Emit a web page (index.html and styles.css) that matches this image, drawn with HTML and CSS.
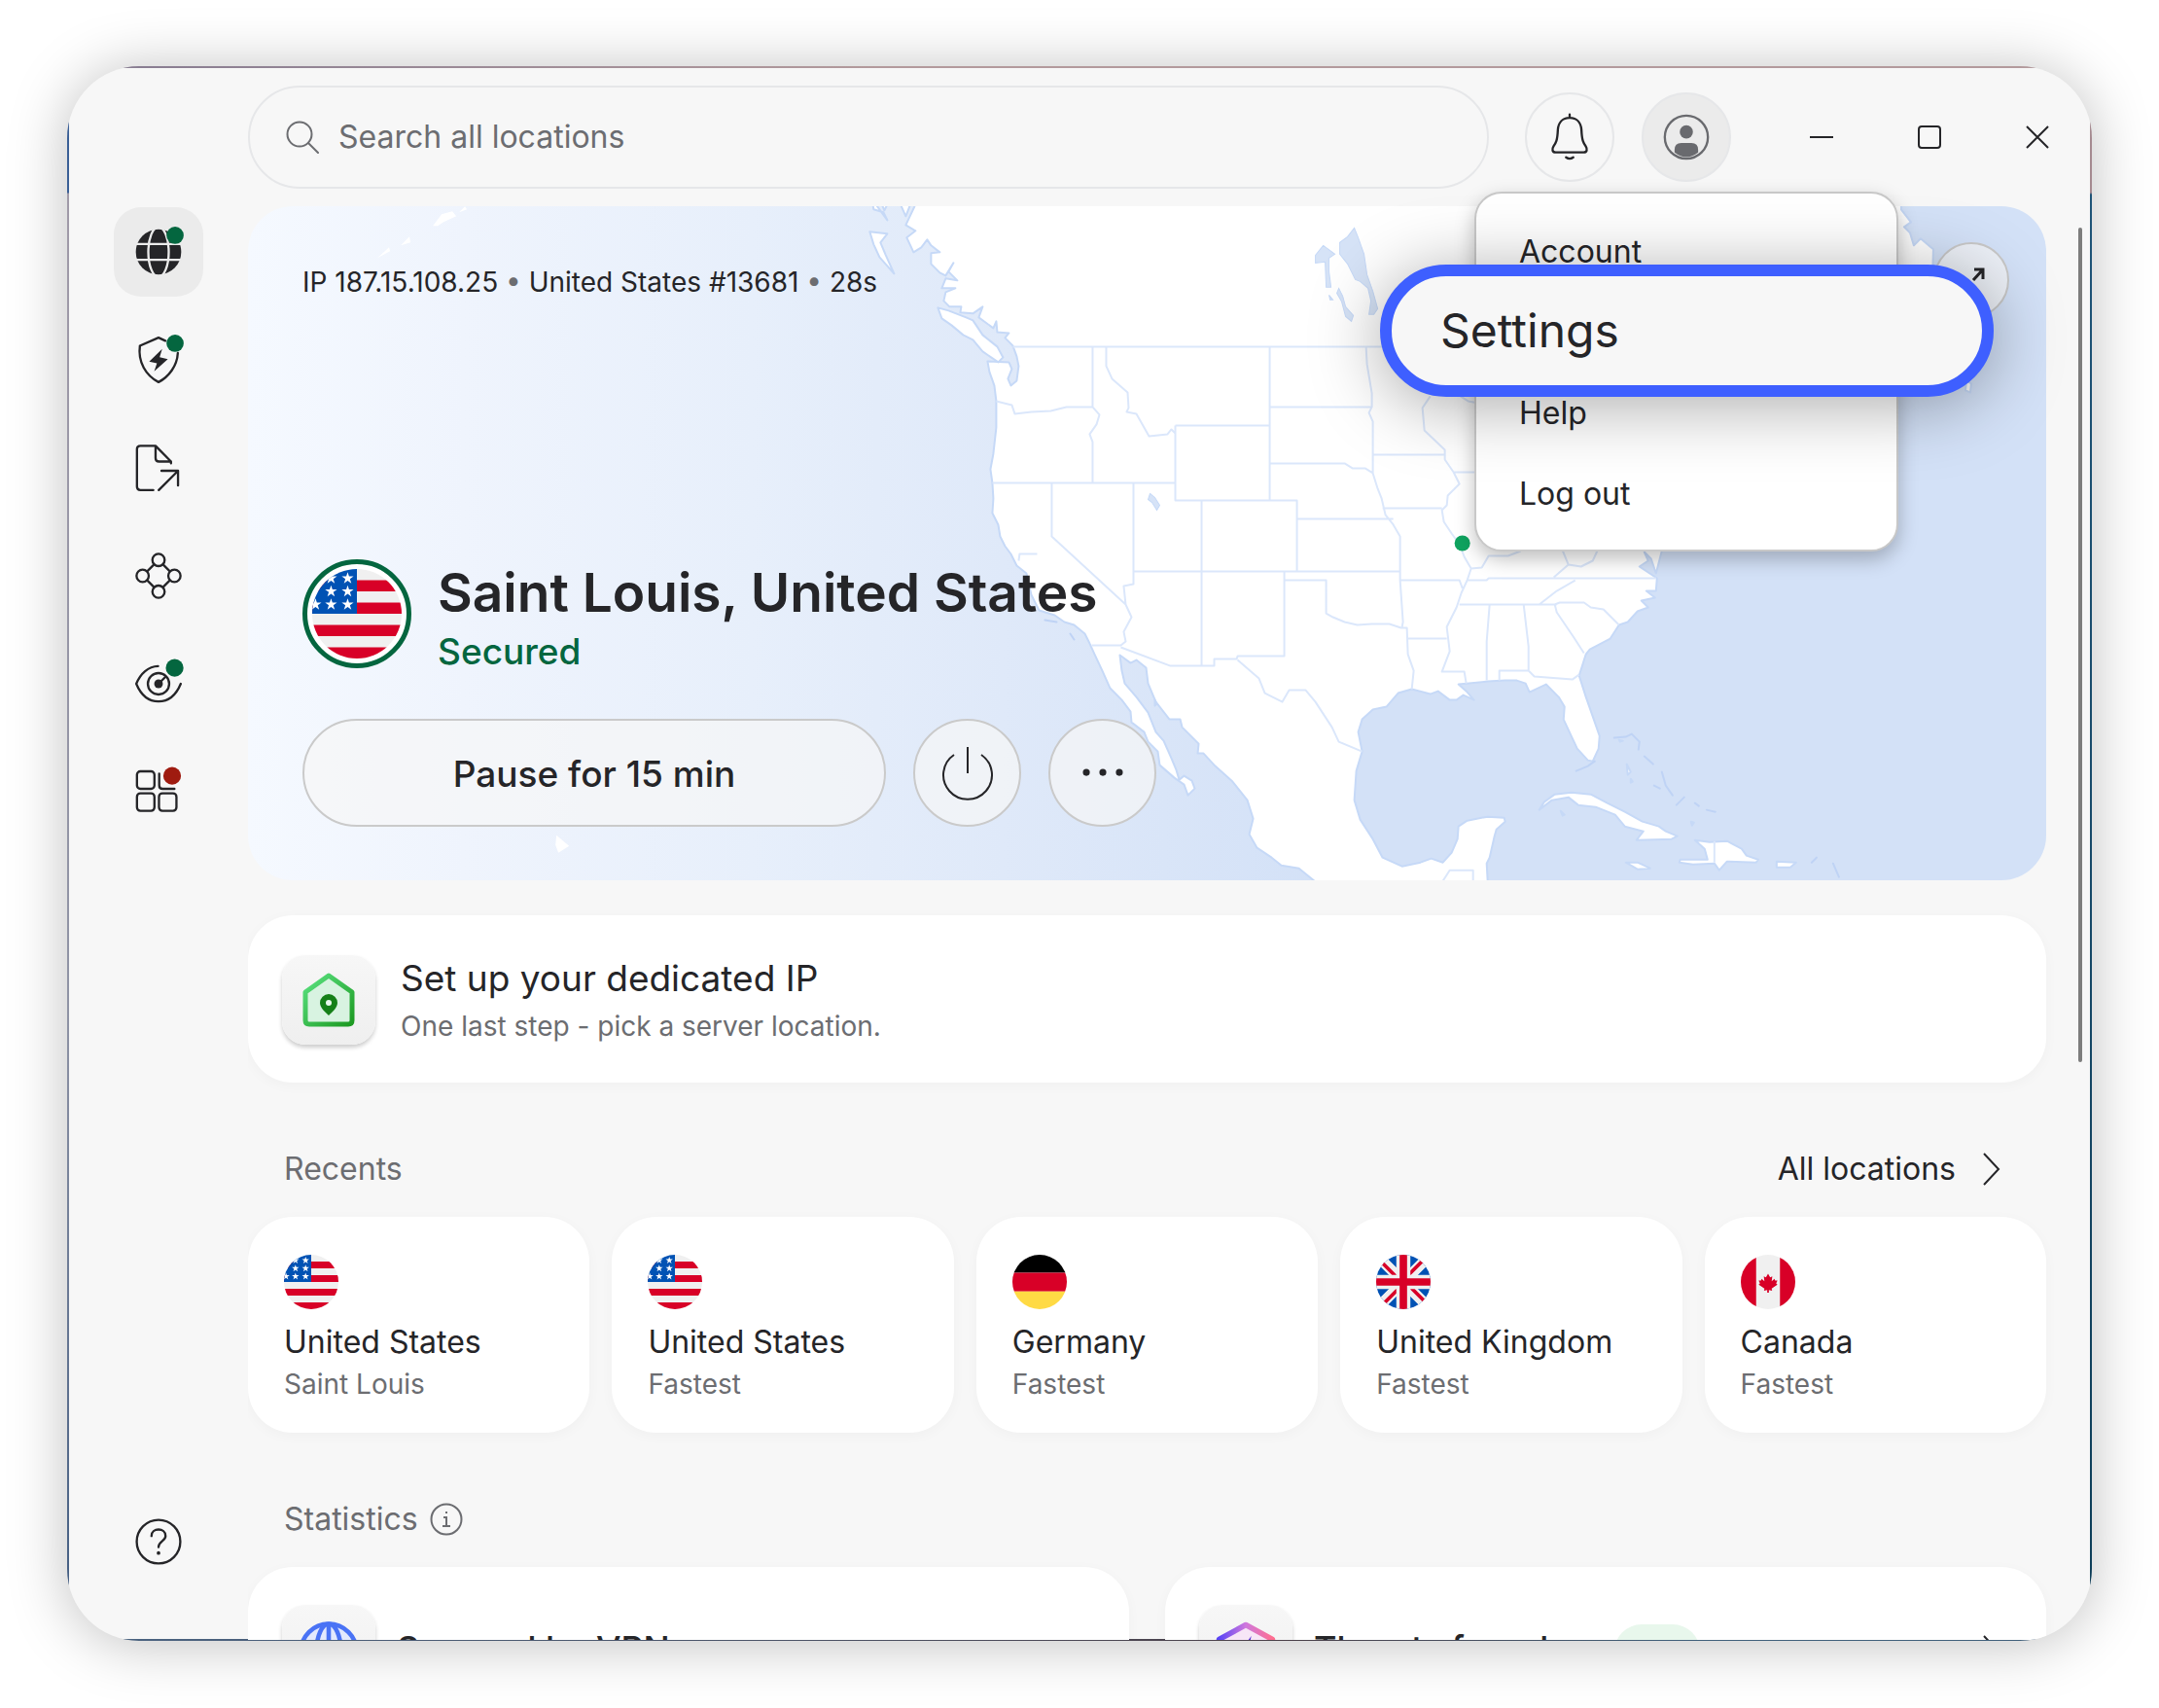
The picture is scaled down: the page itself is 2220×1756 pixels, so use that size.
FILE: index.html
```html
<!DOCTYPE html>
<html lang="en">
<head>
<meta charset="utf-8">
<meta name="viewport" content="width=device-width, initial-scale=1">
<title>VPN</title>
<link rel="stylesheet" href="styles.css">
</head>
<body>
<svg class="defs" aria-hidden="true">
  <defs>
    <clipPath id="round"><circle cx="256" cy="256" r="256"/></clipPath>
    <linearGradient id="green" x1="0" y1="0" x2="1" y2="1"><stop offset="0" stop-color="#5be382"/><stop offset="1" stop-color="#1d9a22"/></linearGradient>
    <linearGradient id="violet" x1="0" y1="0" x2="1" y2="0"><stop offset="0" stop-color="#5b45f5"/><stop offset=".5" stop-color="#cf78dd"/><stop offset="1" stop-color="#ff6f91"/></linearGradient>
    <symbol id="flag-us" viewBox="0 0 512 512">
      <g clip-path="url(#round)">
        <path fill="#f0f0f0" d="M0 0h512v512H0z"/>
        <path fill="#d80027" d="M0 64h512v64H0zM0 192h512v64H0zM0 320h512v64H0zM0 448h512v64H0z"/>
        <path fill="#0052b4" d="M0 0h256v256H0z"/>
        <path id="star" fill="#fff" d="m203 18 8 24h26l-21 15 8 25-21-15-21 15 8-25-21-15h26z"/>
        <use href="#star" y="75"/><use href="#star" y="150"/>
        <use href="#star" x="-95" y="75"/><use href="#star" x="-95" y="150"/><use href="#star" x="-95" y="0"/>
        <use href="#star" x="-184" y="150"/>
      </g>
    </symbol>
    <symbol id="flag-de" viewBox="0 0 512 512">
      <g clip-path="url(#round)"><path d="M0 0h512v170H0z"/><path fill="#d80027" d="M0 170h512v176H0z"/><path fill="#ffda44" d="M0 346h512v166H0z"/></g>
    </symbol>
    <symbol id="flag-gb" viewBox="0 0 512 512">
      <g clip-path="url(#round)">
        <path fill="#0052b4" d="M0 0h512v512H0z"/>
        <path stroke="#f0f0f0" stroke-width="100" d="m0 0 512 512M512 0 0 512"/>
        <path stroke="#d80027" stroke-width="34" d="m0 18 256 256M494 0 256 238M512 494 256 238M18 512l238-238"/>
        <path stroke="#f0f0f0" stroke-width="132" d="M256 0v512M0 256h512"/>
        <path stroke="#d80027" stroke-width="70" d="M256 0v512M0 256h512"/>
      </g>
    </symbol>
    <symbol id="flag-ca" viewBox="0 0 512 512">
      <g clip-path="url(#round)">
        <path fill="#f0f0f0" d="M0 0h512v512H0z"/><path fill="#d80027" d="M0 0h144v512H0zM368 0h144v512H368z"/>
        <path fill="#d80027" d="m256 178 20 34 20-8-6 44 26-22 6 16 22 0-12 28 12 10-54 38 4 20-30-6v24h-16v-24l-30 6 4-20-54-38 12-10-12-28 22 0 6-16 26 22-6-44 20 8z"/>
      </g>
    </symbol>
  </defs>
</svg>

<div class="window">
  <nav class="sidebar" aria-label="Main">
    <button class="nav-item is-active" type="button" aria-label="VPN">
      <svg class="icon" viewBox="0 0 24 24"><circle cx="12" cy="12" r="10" fill="#252528"/><g fill="none" stroke="#ebebeb" stroke-width="1"><path d="M2 8.500h20M2 15.500h20"/><ellipse cx="12" cy="12" rx="4.500" ry="11"/></g><circle cx="19.300" cy="4.700" r="3.800" fill="#04663f"/></svg>
    </button>
    <button class="nav-item" type="button" aria-label="Threat protection">
      <svg class="icon" viewBox="0 0 24 24"><path class="line" d="M15 3.600 12 2.200 3.800 5.800C2.800 13 6.500 19 12 21.800c4.600-2.400 8.200-7.200 8.500-12.800"/><path fill="#252528" d="m13.600 7.200-5.700 5.500 3.400.8-1.200 3.500 6-5.300-3.600-.9z"/><circle cx="19.300" cy="4.700" r="3.800" fill="#04663f"/></svg>
    </button>
    <button class="nav-item" type="button" aria-label="File sharing">
      <svg class="icon" viewBox="0 0 24 24"><path class="line" d="M9.700 21.800H4Q2.500 21.800 2.500 20.300V3.800Q2.500 2.300 4 2.300h6.700l6.800 6.900V10M10.700 2.300v5.400q0 1.500 1.500 1.500h5.300M13.300 13.300h7.300v6.500M20.300 13.600l-8.200 8.200"/></svg>
    </button>
    <button class="nav-item" type="button" aria-label="Meshnet">
      <svg class="icon" viewBox="0 0 24 24"><g class="line"><circle cx="12" cy="5" r="2.700"/><circle cx="12" cy="19" r="2.700"/><circle cx="5" cy="12" r="2.700"/><circle cx="19" cy="12" r="2.700"/><path d="m10 7-3 3M14 7l3 3M10 17l-3-3M14 17l3-3"/></g></svg>
    </button>
    <button class="nav-item" type="button" aria-label="Dark web monitor">
      <svg class="icon" viewBox="0 0 24 24"><path class="line" d="M11.800 4.200C7.500 4.300 4 7.500 2.200 12c2 4.800 5.500 7.800 9.800 7.800s7.800-3 9.800-7.800"/><circle class="line" cx="12" cy="12" r="4.700"/><circle cx="12" cy="12" r="1.900" fill="#252528"/><path class="line" d="m12 12 3-3"/><circle cx="19.100" cy="5" r="3.900" fill="#04663f"/></svg>
    </button>
    <button class="nav-item" type="button" aria-label="All products">
      <svg class="icon" viewBox="0 0 24 24"><g class="line"><rect x="2.500" y="3" width="7.700" height="7.700" rx="1.500"/><rect x="2.500" y="12.700" width="7.700" height="7.700" rx="1.500"/><rect x="12.200" y="12.700" width="7.700" height="7.700" rx="1.500"/><path d="M12.300 4v5.200q0 1.500 1.500 1.500H19"/></g><circle cx="18" cy="5" r="3.900" fill="#9f1b10"/></svg>
    </button>
    <button class="nav-item nav-help" type="button" aria-label="Help">
      <svg class="icon" viewBox="0 0 24 24"><circle class="line" cx="12" cy="12" r="9.600"/><path class="line" d="M8.900 9.500c0-3.800 6.200-3.800 6.200 0 0 2.200-3.100 2.300-3.100 4.900"/><circle cx="12" cy="17" r=".8" fill="#252528"/></svg>
    </button>
  </nav>

  <div class="content">
    <header class="topbar">
      <label class="search">
        <svg class="search-icon" viewBox="0 0 34 34"><circle cx="14" cy="14" r="12.500"/><path d="m23 23 10 10"/></svg>
        <input type="search" placeholder="Search all locations" aria-label="Search all locations">
      </label>
      <div class="actions">
        <button class="round" type="button" aria-label="Notifications">
          <svg class="icon" viewBox="0 0 24 24"><path class="line" d="M12 3.500c-3.300 0-5 2.300-5.200 5.300-.2 4.600-.8 5.600-1.900 7.200-.8 1.300-.6 2.700.9 2.700h12.400c1.500 0 1.700-1.400.9-2.700-1.100-1.600-1.700-2.600-1.900-7.200-.2-3-1.900-5.300-5.200-5.300zM12 2v1.500M10.400 20.900q1.600 1.200 3.200 0"/></svg>
        </button>
        <div class="account">
          <button class="round is-open" type="button" aria-label="Account" aria-haspopup="menu" aria-expanded="true">
            <svg class="icon" viewBox="0 0 24 24"><circle cx="12" cy="12" r="9.500" fill="none" stroke="#696a6e" stroke-width="1"/><circle cx="12" cy="9.700" r="2.900" fill="#696a6e"/><path fill="#696a6e" d="M6.800 18.800v-1.200q0-3 3-3h4.400q3 0 3 3v1.200q-5.200 4-10.400 0z"/></svg>
          </button>
          <div class="menu" role="menu">
            <button type="button" role="menuitem">Account</button>
            <button class="menu-focus" type="button" role="menuitem">Settings</button>
            <button type="button" role="menuitem">Help</button>
            <button type="button" role="menuitem">Log out</button>
          </div>
        </div>
      </div>
      <div class="controls">
        <button type="button" aria-label="Minimize"><svg viewBox="0 0 24 24"><path d="M0 12h24"/></svg></button>
        <button type="button" aria-label="Maximize"><svg viewBox="0 0 24 24"><rect x="1" y="1" width="22" height="22" rx="3"/></svg></button>
        <button type="button" aria-label="Close"><svg viewBox="0 0 24 24"><path d="m1 1 22 22M23 1 1 23"/></svg></button>
      </div>
    </header>

    <main class="page">
      <section class="hero">
        <svg class="map" viewBox="255 212 1848 694" preserveAspectRatio="xMidYMid slice" aria-hidden="true">
          <g class="land">
            <path d="M940 205 940 213 931 232 941 238 932 245 939 260 947 255 953 247 957 253 966 260 957 261 957 272 966 281 972 284 980 271 975 280 984 289 972 287 968 297 982 297 972 301 970 310 976 316 988 316 987 322 1000 323 1010 316 1006 327 1021 338 1024 331 1025 342 1037 343 1033 348 1041 356 1045 367 1047 377 1045 392 1039 397 1036 390 1040 380 1037 373 1015 372 1017 383 1022 397 1024 413 1024 440 1021 467 1018 483 1020 497 1021 513 1020 528 1026 540 1028 552 1033 562 1039 570 1045 582 1055 590 1060 612 1068 628 1084 633 1094 640 1104 643 1115 652 1120 662 1125 673 1133 690 1141 708 1153 720 1162 732 1163 743 1176 753 1180 763 1190 773 1192 787 1207 800 1217 807 1221 818 1228 811 1225 803 1217 798 1212 802 1209 792 1204 780 1196 762 1188 753 1180 733 1168 717 1156 703 1153 690 1151 674 1162 682 1168 679 1178 687 1180 703 1188 722 1202 740 1213 740 1215 748 1232 765 1231 775 1237 775 1249 788 1266 803 1282 823 1288 842 1284 858 1292 872 1307 882 1317 890 1335 893 1351 906V915H1529V906L1528 888 1531 882 1536 860 1538 853 1547 845 1546 841 1529 840 1508 844 1499 850 1498 863 1492 877 1483 887 1471 883 1460 887 1441 891 1421 882 1411 863 1398 843 1392 823 1394 793 1400 773 1396 753 1400 740 1411 730 1425 727 1437 713 1451 709 1470 714 1478 711 1490 720 1497 720 1504 715 1515 720 1508 712 1499 704 1510 703 1529 701 1547 700 1559 700 1568 703 1572 712 1589 704 1602 717 1608 727 1607 740 1614 755 1621 770 1632 782 1637 783 1643 770 1644 757 1637 737 1630 717 1623 695 1630 673 1634 668 1655 657 1664 643 1673 640 1683 629 1694 625 1687 618 1701 615 1692 608 1702 608 1703 595 1685 583 1694 577 1690 568 1697 575 1702 590 1708 567 1720 550 1900 470 1945 405 1985 330 1987 257 1974 246 1967 253 1963 240 1957 234 1964 229 1954 216V205z"/>
            <path d="m964 317 11 3 18 7 7 3 10 15 15 12 6 11-5 5-16-11-10-12-10-5-12-10-10-7zM894 239l18 2-7 9 5 12 9 20-15-17-6-13zM896 205l16 22-4-8-10-3zM904 205l5 12 6-12zM923 205l8 18 7-18z"/>
            <path d="m1582 833 5-8 11-8 17-2 20 2 17 9 18 9 18 10 17 5 7 5 12 5-6 3-36 1 7-9-19-5-10-12-20-8-18-2-10-8-17 3zM1742 864l15 2 18-1 15 8 5 7 12 4-2 3-30-1-8 9-5-7-22 1-14-2 1-3 28 0-3-11zM1671 887l12 0 13 6-13 1zM1826 886l20 1-6 5h-14zM1672 786l4 8-3 3zM1676 801l2 3-2 1zM1604 834l4 4-2 1zM2021 392l5 3-1 9-5-2zM1187 720l2 4-2 2zM1738 845l3 1-2 3zM1664 761l4 1-3 1z"/>
            <path class="plain" d="m572 859 13 11-11 7-3-8zM445 233l9-12 11-3 4 5-13 6-6 4zM388 266l12-11 1 4zM412 253l9-9 1 6zM472 219l6-6 2 3zM484 212l4-3 1 3zM429 241l4-3zM565 852l4 1z"/>
          </g>
          <path class="isles" d="m1659 759 12-1 6-3 8 8-1 8M1690 778l9 8M1700 808l6 3M1708 794l4 14 7 10M1723 828l8-8M1742 826l4 3M1754 833l9 2M1862 887l5-5M1884 888l6 14M1074 638l12 2M1100 652l4 6M1620 793l12-5 7-5"/>
          <path class="water" d="m1392 235 4 10 6 17 3 21 6 17 5 18-4 6h-5l2-14-3-13-8-7-5-2-8-16-8-10v-12l8-6zM1360 253l12 9-6 4v14l2 16h-5l-1-26-10 1v-8zM1376 297l4 8 3 11 8 9-2 6-6-5-4-15-5-9zM1366 304l4 5-3 0zM1182 508l5 4 5 8-3 5-5-8-4-3z"/>
          <path class="borders" d="M1041 357H1480M1123 357V419M1024 413 1040 417 1043 426 1060 424 1080 423 1096 419 1123 419 1130 427 1127 437 1120 447 1123 455V497M1020 497H1208M1137 357V377L1143 390 1159 404 1160 420 1158 424 1168 426 1181 449 1200 447 1204 442 1208 446M1208 438V515H1333V588M1208 438H1305M1305 357V515M1305 419H1410M1305 477H1382L1390 482H1403L1411 487M1404 357 1405 375 1410 405V419L1407 425 1411 434V487L1416 503 1420 513 1424 530 1432 540 1439 552V597L1442 640 1441 645M1081 497V552L1157 622M1165 497V601L1155 603 1157 622 1163 635 1155 650 1157 660 1152 664H1122M1235 515V685M1165 588H1439M1333 534H1432M1320 588V675H1272L1271 678H1248V685H1203L1152 666M1320 597H1363V631L1370 635 1382 640 1395 643 1410 642 1428 642 1440 646H1446L1447 673 1453 690 1451 709M1272 679 1294 698 1300 713 1318 722 1325 710H1342L1352 722 1369 748 1376 763 1400 773M1439 597H1500L1503 605M1470 408 1462 420 1464 443 1485 463V473L1494 486 1500 498 1488 510 1487 520 1482 525 1484 537 1492 549 1500 560 1505 573 1512 585 1508 597 1502 610 1497 625 1487 645 1490 670 1482 691H1505L1507 703M1447 657H1487M1411 468H1485M1421 523H1482M1494 486H1560M1501 408 1509 413 1520 415M1508 597H1528L1530 595H1702M1500 622H1600M1531 622 1528 660V700M1566 622 1571 665V690M1541 700V690H1571L1577 696 1616 699 1623 694M1598 622 1600 630 1617 655 1628 672M1598 622 1603 620H1628L1635 625 1648 627 1664 643M1582 622 1600 608 1619 597M1512 585 1523 584 1530 572H1550L1563 567M1597 594 1612 581 1605 564M1612 581 1625 583 1637 577 1643 564M1483 906 1490 895H1514V906M1762 865V887M1066 570 1048 570 1047 577"/>
          <circle cx="1503" cy="559" r="8" fill="#0fa35f"/>
        </svg>
        <div class="hero-top">
          <p class="status">IP 187.15.108.25 <span>•</span> United States #13681 <span>•</span> 28s</p>
          <button class="expand" type="button" aria-label="Expand map"><svg viewBox="0 0 36 36"><path d="M21 7h9v10M30 7 20 18M15 31H4V20M4 31l12-12"/></svg></button>
        </div>
        <div>
          <div class="place">
            <span class="ring"><svg viewBox="0 0 512 512"><use href="#flag-us"/></svg></span>
            <div class="place-text">
              <h1>Saint Louis, United States</h1>
              <p>Secured</p>
            </div>
          </div>
          <div class="hero-buttons">
            <button class="glass pause" type="button">Pause for 15 min</button>
            <button class="glass" type="button" aria-label="Disconnect"><svg viewBox="0 0 56 56"><path d="M28 1v27M14 9a25 25 0 1 0 28 0"/></svg></button>
            <button class="glass" type="button" aria-label="More"><svg class="dots" viewBox="0 0 56 56"><circle cx="9" cy="27" r="4"/><circle cx="28" cy="27" r="4"/><circle cx="47" cy="27" r="4"/></svg></button>
          </div>
        </div>
      </section>

      <a class="card setup" href="#dedicated-ip">
        <span class="tile"><svg viewBox="0 0 56 56"><path fill="#d8f3e1" stroke="url(#green)" stroke-width="5" stroke-linejoin="round" d="M4 20 28 3l24 17v29q0 4-4 4H8q-4 0-4-4z"/><path fill="#158018" d="M28 22a9 9 0 0 1 9 9c0 5-5 9-9 13-4-4-9-8-9-13a9 9 0 0 1 9-9z"/><circle cx="28" cy="31" r="3" fill="#e8f8ec"/></svg></span>
        <span class="setup-text"><strong>Set up your dedicated IP</strong><small>One last step - pick a server location.</small></span>
      </a>

      <div class="section-head">
        <h2>Recents</h2>
        <a href="#locations">All locations <svg viewBox="0 0 20 34"><path d="m2 1 15 16L2 33"/></svg></a>
      </div>
      <div class="recents">
        <a class="card recent" href="#us1"><svg><use href="#flag-us"/></svg><strong>United States</strong><small>Saint Louis</small></a>
        <a class="card recent" href="#us2"><svg><use href="#flag-us"/></svg><strong>United States</strong><small>Fastest</small></a>
        <a class="card recent" href="#de"><svg><use href="#flag-de"/></svg><strong>Germany</strong><small>Fastest</small></a>
        <a class="card recent" href="#gb"><svg><use href="#flag-gb"/></svg><strong>United Kingdom</strong><small>Fastest</small></a>
        <a class="card recent" href="#ca"><svg><use href="#flag-ca"/></svg><strong>Canada</strong><small>Fastest</small></a>
      </div>

      <div class="section-head">
        <h2>Statistics <svg class="info" viewBox="0 0 34 34"><circle cx="17" cy="17" r="15.500"/><path d="M14 15h3v9M13 24h8M17 9v2"/></svg></h2>
      </div>
      <div class="stats">
        <a class="card stat" href="#secured">
          <span class="tile"><svg viewBox="0 0 56 56"><g fill="#e3e9fd" stroke="#4a73f5" stroke-width="4"><circle cx="28" cy="28" r="25"/><ellipse cx="28" cy="28" rx="11" ry="25"/><path d="M28 3v50M3 28h50"/></g></svg></span>
          <strong>Secured by VPN</strong>
        </a>
        <a class="card stat" href="#threats">
          <span class="tile"><svg viewBox="0 0 56 56"><path fill="#f7e6f7" stroke="url(#violet)" stroke-width="5" stroke-linejoin="round" d="M28 4 52 17v14q0 14-24 22Q4 45 4 31V17z"/><path fill="#5b35d5" d="M33 14 20 31h7l-2 10 12-14h-7z"/></svg></span>
          <strong>Threats found</strong>
          <span class="pill"></span>
          <svg class="stat-arrow" viewBox="0 0 20 34"><path d="m2 1 15 16L2 33"/></svg>
        </a>
      </div>
    </main>
  </div>
  <div class="scrollbar"></div>
</div>
</body>
</html>
```
FILE: styles.css
```css
* { box-sizing: border-box; }

body {
  margin: 0;
  height: 100vh;
  padding: 68px 69px 69px;
  background: #fff;
  color: #252528;
  font-family: Inter, "Liberation Sans", sans-serif;
  font-size: 32px;
  line-height: 40px;
}

button, input { font: inherit; color: inherit; }
button { margin: 0; padding: 0; border: 0; background: none; cursor: pointer; }
a { color: inherit; text-decoration: none; }
h1, h2, p { margin: 0; font-weight: 400; }
strong { font-weight: 400; }
svg { display: block; flex: none; }
.defs { position: absolute; width: 0; height: 0; }

/* Application window; the thin strips are the desktop showing at its edges */
.window {
  position: relative;
  display: flex;
  height: 100%;
  padding-bottom: 1px;
  overflow: hidden;
  border-radius: 74px;
  background:
    linear-gradient(90deg, #857b91, #b39a9c 40%, #b39a9c) top / 100% 2px no-repeat,
    linear-gradient(90deg, #4a6482, #4c5468 35%, #4b4048 60%, #41617c 80%) bottom / 100% 2px no-repeat,
    linear-gradient(#3a5f96 130px, #a09aa8 131px, #8f93a5 60%, #3e5a80) left / 2px 100% no-repeat,
    linear-gradient(#a58a90 130px, #1f5478 132px, #0d3d57) right / 2px 100% no-repeat,
    #f7f7f7;
  box-shadow: 0 3px 60px rgba(0, 0, 0, .25);
}

.sidebar {
  flex: none;
  width: 186px;
  padding: 145px 0 55px 2px;
  display: flex;
  flex-direction: column;
  align-items: center;
  gap: 19px;
}
.nav-item {
  width: 92px;
  height: 92px;
  border-radius: 28px;
  display: grid;
  place-items: center;
}
.nav-item.is-active { background: #ebebeb; }
.nav-help { margin-top: auto; }
.icon { width: 56px; height: 56px; }
.line {
  fill: none;
  stroke: #252528;
  stroke-width: 1;
  stroke-linecap: round;
  stroke-linejoin: round;
}

.content { flex: 1; min-width: 0; display: flex; flex-direction: column; }

.topbar { flex: none; height: 144px; padding: 2px 1px 0 0; display: flex; align-items: center; gap: 37px; }
.search {
  flex: 1;
  height: 106px;
  padding: 0 37px;
  display: flex;
  align-items: center;
  gap: 20px;
  border: 2px solid #e6e7e9;
  border-radius: 53px;
}
.search-icon { width: 34px; height: 34px; fill: none; stroke: #6c6d71; stroke-width: 2; stroke-linecap: round; }
.search input { flex: 1; min-width: 0; padding: 0; border: 0; outline: 0; background: none; }
.search input::placeholder { color: #6c6d71; opacity: 1; }

.actions { display: flex; gap: 28px; }
.round {
  width: 92px;
  height: 92px;
  border: 2px solid #e6e7e9;
  border-radius: 50%;
  display: grid;
  place-items: center;
}
.round.is-open { background: #ebebeb; }
.account { position: relative; z-index: 2; }
.controls { display: flex; }
.controls button { width: 111px; height: 92px; display: grid; place-items: center; }
.controls svg { width: 24px; height: 24px; fill: none; stroke: #252528; stroke-width: 2; }

.menu {
  position: absolute;
  top: 102px;
  left: 50%;
  width: 436px;
  padding: 18px 0 16px;
  display: flex;
  flex-direction: column;
  transform: translateX(-50%);
  border: 2px solid #c8c8c8;
  border-radius: 28px;
  background: #fff;
  box-shadow: 0 8px 20px rgba(0, 0, 0, .25);
}
.menu button { height: 83px; padding: 0 44px; text-align: left; }
.menu .menu-focus {
  position: relative;
  z-index: 1;
  height: 136px;
  margin: -28px -100px -25px -99px;
  padding: 0 50px;
  border: 12px solid #3e5fff;
  border-radius: 68px;
  background: #f7f7f7;
  box-shadow: 0 8px 72px rgba(0, 0, 0, .34);
  font-size: 48px;
}

.page { flex: 1; min-height: 0; overflow: hidden; margin-right: 10px; padding-right: 37px; }

.hero {
  position: relative;
  height: 693px;
  margin-bottom: 36px;
  padding: 37px 38px 55px 56px;
  overflow: hidden;
  display: flex;
  flex-direction: column;
  justify-content: space-between;
  border-radius: 46px;
  background: linear-gradient(90deg, #f5f9ff 0, #eff4fd 12%, #e7effb 28%, #dfe9f9 42%, #d3e1f7 60%);
}
.map { position: absolute; inset: 0; width: 100%; height: 100%; }
.land { fill: #fff; stroke: #c6d9f7; stroke-width: 2; stroke-linejoin: round; }
.plain { stroke: none; }
.water { fill: #d6e3f7; stroke: #c6d9f7; stroke-width: 1; }
.isles { fill: none; stroke: #bfd3f5; stroke-width: 2; stroke-linecap: round; }
.borders { fill: none; stroke: #dbe7fb; stroke-width: 2; stroke-linejoin: round; }

.hero-top { position: relative; display: flex; align-items: center; justify-content: space-between; }
.status { padding-top: 4px; font-size: 28px; }
.status span { color: #6c6d71; }
.expand {
  width: 78px;
  height: 78px;
  display: grid;
  place-items: center;
  border: 2px solid #c8c8c8;
  border-radius: 50%;
  background: rgba(247, 247, 247, .7);
}
.expand svg { width: 36px; height: 36px; fill: none; stroke: #252528; stroke-width: 3; }

.place { position: relative; display: flex; align-items: center; gap: 27px; margin-bottom: 47px; }
.ring {
  width: 112px;
  height: 112px;
  padding: 5px;
  border: 5px solid #04663f;
  border-radius: 50%;
  background: #fff;
}
.ring svg { width: 92px; height: 92px; }
.place-text { padding-top: 8px; }
.place-text h1 { font-size: 55px; line-height: 64px; font-weight: 600; }
.place-text p { padding-top: 7px; color: #04663f; font-size: 37px; line-height: 44px; font-weight: 500; }

.hero-buttons { position: relative; display: flex; gap: 28px; }
.glass {
  width: 111px;
  height: 111px;
  display: grid;
  place-items: center;
  border: 2px solid #cacaca;
  border-radius: 56px;
  background: rgba(247, 247, 247, .7);
}
.glass svg { width: 56px; height: 56px; fill: none; stroke: #252528; stroke-width: 2; }
.glass .dots { width: 50px; height: 50px; fill: #252528; stroke: none; }
.pause { width: 600px; padding-top: 2px; font-size: 37px; font-weight: 500; }

.card { display: block; border-radius: 46px; background: #fff; box-shadow: 0 3px 14px rgba(0, 0, 0, .03); }
small { color: #6c6d71; font-size: 28px; }
.tile {
  flex: none;
  width: 96px;
  height: 92px;
  display: grid;
  place-items: center;
  border-radius: 24px;
  background: linear-gradient(#f7f7f7, #efefef);
  box-shadow: 0 3px 4px rgba(0, 0, 0, .2);
}
.tile svg { width: 56px; height: 56px; }

.setup { height: 172px; padding: 2px 35px 0; display: flex; align-items: center; gap: 26px; }
.setup-text { display: flex; flex-direction: column; gap: 4px; }
.setup-text strong { font-size: 37px; line-height: 50px; }

.section-head { padding: 69px 46px 29px 37px; display: flex; justify-content: space-between; color: #6c6d71; }
.section-head h2 { display: flex; align-items: center; gap: 12px; font-size: 32px; }
.section-head a { display: flex; align-items: center; gap: 27px; color: #252528; }
.section-head a svg, .stat-arrow { width: 20px; height: 34px; fill: none; stroke: #252528; stroke-width: 2; }
.info { width: 34px; height: 34px; fill: none; stroke: #6c6d71; stroke-width: 2; }

.recents { display: grid; grid-template-columns: repeat(5, 1fr); gap: 23px; }
.recent { height: 222px; padding: 39px 37px 0; display: flex; flex-direction: column; }
.recent svg { width: 56px; height: 56px; margin-bottom: 11px; }
.recent strong { line-height: 46px; }

.stats { display: grid; grid-template-columns: 1fr 1fr; gap: 37px; }
.stat { padding: 39px 46px 39px 35px; display: flex; align-items: center; }
.stat .tile { height: 96px; margin-right: 22px; }
.stat .tile svg { width: 64px; height: 64px; }
.stat strong { padding-bottom: 6px; font-size: 36px; font-weight: 500; }
.pill {
  width: 88px;
  height: 56px;
  margin-left: 68px;
  border-radius: 28px;
  background: #e8f7ec;
}
.stat-arrow { margin-left: auto; }

.scrollbar {
  position: absolute;
  top: 166px;
  right: 10px;
  width: 4px;
  height: 53%;
  border-radius: 2px;
  background: #7d7d7d;
}
```
